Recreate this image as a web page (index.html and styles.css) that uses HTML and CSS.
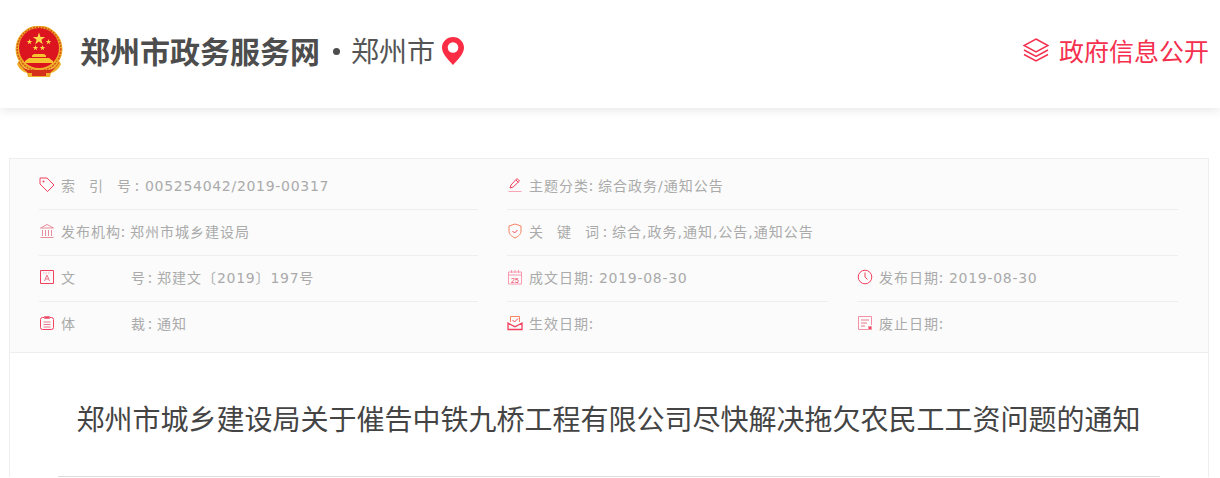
FILE: index.html

```html
<!DOCTYPE html>
<html lang="zh-CN">
<head>
    <meta charset="UTF-8">
    <meta name="viewport" content="width=device-width, initial-scale=1.0">
    <title>郑州市政务服务网</title>
    <link rel="stylesheet" href="styles.css">
</head>
<body>
    <header class="top">
        <svg class="emblem" viewBox="0 0 48 52">
            <circle cx="24" cy="23" r="23.5" fill="#eeb02a"/>
            <circle cx="24" cy="23" r="21.8" fill="none" stroke="#d9541a" stroke-width="1.500" stroke-dasharray="2 1"/>
            <circle cx="24" cy="22" r="20" fill="#dc1420"/>
            <polygon fill="#ffd84a" points="24,6.500 25.500,11 30.200,11 26.400,13.800 27.800,18.300 24,15.500 20.200,18.300 21.600,13.800 17.800,11 22.500,11"/>
            <polygon fill="#ffd84a" points="14.500,13 15.200,15 17.300,15 15.600,16.200 16.200,18.200 14.500,17 12.800,18.200 13.400,16.200 11.700,15 13.800,15"/>
            <polygon fill="#ffd84a" points="33.500,13 34.200,15 36.300,15 34.600,16.200 35.200,18.200 33.500,17 31.800,18.200 32.400,16.200 30.700,15 32.800,15"/>
            <polygon fill="#ffd84a" points="20.500,19 21.200,21 23.300,21 21.600,22.200 22.200,24.200 20.500,23 18.800,24.200 19.400,22.200 17.700,21 19.800,21"/>
            <polygon fill="#ffd84a" points="27.500,19 28.200,21 30.300,21 28.600,22.200 29.200,24.200 27.500,23 25.800,24.200 26.400,22.200 24.700,21 26.800,21"/>
            <path fill="#f6c42f" d="M17 31h14v-1.500l-2-1.500h-10l-2 1.500zM10 35l4-3h20l4 3v2H10z"/>
            <path fill="#eeb02a" d="M5 33c2 8 8 13 19 13s17-5 19-13l3 5c-2 5-6 8-10 9l-1 4H13l-1-4c-4-1-8-4-10-9z"/>
            <path fill="none" stroke="#d9541a" d="M4 36c3 6 7 9 12 10M44 36c-3 6-7 9-12 10"/>
            <path fill="#d5301c" d="M8 42l6 2 20 0 6-2-5 5H13zM17 47h14v3H17z"/>
        </svg>
        <h1 class="site-name">郑州市政务服务网</h1>
        <span class="dot"></span>
        <span class="city">郑州市</span>
        <svg class="pin" viewBox="0 0 22 28">
            <path fill="#fa2d45" d="M11 0C4.900 0 0 4.800 0 10.800 0 17.500 8 24.500 11 28c3-3.500 11-10.500 11-17.200C22 4.800 17.100 0 11 0z"/>
            <circle cx="11" cy="10.500" r="5.300" fill="#fff"/>
        </svg>
        <a class="open-link">
            <svg class="layers" viewBox="0 0 26 26">
                <path d="M13 2L25 8.500 13 15 1 8.500z"/>
                <path d="M1 13l12 6.500L25 13"/>
                <path d="M1 17.500L13 24l12-6.500"/>
            </svg>
            政府信息公开
        </a>
    </header>

    <main class="panel">
        <section class="info">
            <div class="item">
                <svg class="ico" viewBox="0 0 16 16"><path d="M1 2.500V1h7l7 7-6.500 6.500L1 7z"/><circle cx="4.500" cy="4.500" r="1" fill="#f3405f" stroke="none"/></svg>
                <span class="label tri">索引号</span><span class="colon">:</span>
                <span class="num date">005254042/2019-00317</span>
            </div>
            <div class="item wide">
                <svg class="ico" viewBox="0 0 16 16"><path d="M3 11l1-3 6-6.500 2.500 2.500-6.300 6zM9 3l2.500 2.500"/><path d="M1.500 14.500h13" stroke="#f9a5b3"/></svg>
                <span class="label">主题分类</span><span class="colon">:</span>
                <span class="value">综合政务/通知公告</span>
            </div>

            <div class="item">
                <svg class="ico" viewBox="0 0 16 16"><path d="M8 1.500L1.500 5h13zM3.500 7v6M6.500 7v6M9.500 7v6M12.500 7v6M1.500 14.500h13" stroke="#e98c9c"/></svg>
                <span class="label">发布机构</span><span class="colon">:</span>
                <span class="value">郑州市城乡建设局</span>
            </div>
            <div class="item wide">
                <svg class="ico" viewBox="0 0 16 16"><path d="M8 1l6 2v5c0 3.500-3 5.500-6 7-3-1.500-6-3.500-6-7V3z" stroke="#f7845f"/><path d="M5.500 8l2 2 3-3"/></svg>
                <span class="label tri">关键词</span><span class="colon">:</span>
                <span class="value">综合,政务,通知,公告,通知公告</span>
            </div>

            <div class="item">
                <svg class="ico" viewBox="0 0 16 16"><path d="M1.500 1.500h13v13h-13z"/><path d="M4 4h8" stroke="#f9a5b3" stroke-dasharray="1.500 1"/><path d="M5.500 12L8 6l2.500 6M6.500 10h3" stroke="#e9788c"/></svg>
                <span class="label duo">文号</span><span class="colon">:</span>
                <span class="value">郑建文〔<span class="num">2019</span>〕<span class="num">197</span>号</span>
            </div>
            <div class="item">
                <svg class="ico" viewBox="0 0 16 16"><path d="M1.500 3h13v12h-13zM1.500 6h13M4.500 1v3M8 1v3M11.500 1v3" stroke="#f79ab0"/><text x="8" y="13.500" class="ico-day">25</text></svg>
                <span class="label">成文日期</span><span class="colon">:</span>
                <span class="num date">2019-08-30</span>
            </div>
            <div class="item">
                <svg class="ico" viewBox="0 0 16 16"><circle cx="8" cy="8" r="6.800"/><path d="M8 3.500V8l2.500 2.500"/></svg>
                <span class="label">发布日期</span><span class="colon">:</span>
                <span class="num date">2019-08-30</span>
            </div>

            <div class="item last">
                <svg class="ico" viewBox="0 0 16 16"><rect x="1.500" y="2.500" width="13" height="12" rx="2"/><path d="M5.500 1.500h5v2h-5zM4.500 7h7M4.500 9.500h7M4.500 12h7" stroke="#e9788c"/></svg>
                <span class="label duo">体裁</span><span class="colon">:</span>
                <span class="value">通知</span>
            </div>
            <div class="item last">
                <svg class="ico" viewBox="0 0 16 16"><path d="M3.500 7V1.500h9V7" stroke="#f7845f"/><path d="M5.500 5l2 2 3.500-3.500"/><path d="M1 8l6.500 3.500h1L15 8v6.500H1z" stroke-width="1.300"/></svg>
                <span class="label">生效日期</span><span class="colon">:</span>
            </div>
            <div class="item last">
                <svg class="ico" viewBox="0 0 16 16"><path d="M11 14.500H1.500v-13h13V10" stroke="#f58fa3"/><path d="M4 5h8M4 8h6M4 11h4" stroke="#e9788c"/><path d="M11.500 11.500l3 3M14.500 11.500l-3 3" stroke-width="1.500"/></svg>
                <span class="label">废止日期</span><span class="colon">:</span>
            </div>
        </section>

        <h2 class="doc-title">郑州市城乡建设局关于催告中铁九桥工程有限公司尽快解决拖欠农民工工资问题的通知</h2>
    </main>
</body>
</html>
```

FILE: styles.css

```css
html, body {
    height: 478px;
    overflow: hidden;
}

body {
    margin: 0;
    background-color: #fff;
    font-family: "Noto Sans CJK SC", "Liberation Sans", sans-serif;
}

.top {
    display: flex;
    align-items: center;
    height: 108px;
    padding: 0 11px 4px 15px;
    box-sizing: border-box;
    background-color: #fff;
    box-shadow: 0 2px 10px rgba(0, 0, 0, 0.1);
}

.emblem {
    width: 48px;
    height: 52px;
    margin-right: 17px;
}

.site-name {
    margin: 0 0 5px;
    font-size: 30px;
    font-weight: bold;
    color: #4d4d4d;
}

.dot {
    width: 7px;
    height: 7px;
    margin: 0 11px 2px 13px;
    border-radius: 50%;
    background-color: #4d4d4d;
}

.city {
    margin-bottom: 5px;
    font-size: 28px;
    color: #555;
}

.pin {
    width: 22px;
    height: 28px;
    margin: 0 0 3px 7px;
}

.open-link {
    display: flex;
    align-items: center;
    margin: 0 0 5px auto;
    font-size: 25px;
    color: #f5304f;
}

.layers {
    width: 26px;
    height: 26px;
    margin-right: 10px;
    fill: none;
    stroke: #f5304f;
    stroke-width: 1.5;
}

.panel {
    width: 1198px;
    margin: 50px 0 0 9px;
    border: 1px solid #eee;
    border-bottom: none;
}

.info {
    display: grid;
    grid-template-columns: 439px 321px 321px;
    column-gap: 29px;
    padding: 5px 29px 4px;
    background-color: #fbfbfb;
    border-bottom: 1px solid #eee;
}

.item {
    display: flex;
    align-items: center;
    height: 46px;
    padding-bottom: 3px;
    box-sizing: border-box;
    border-bottom: 1px solid #eee;
    font-size: 14px;
    letter-spacing: 1px;
    color: #aaa;
}

.item.wide {
    grid-column: span 2;
}

.item.last {
    padding-bottom: 4px;
    border-bottom: none;
}

.ico {
    flex: none;
    width: 16px;
    height: 16px;
    margin-right: 6px;
    fill: none;
    stroke: #f3405f;
    stroke-width: 1;
}

.ico-day {
    font-family: "Liberation Sans", sans-serif;
    font-size: 7px;
    letter-spacing: 0;
    text-anchor: middle;
    fill: #f3405f;
    stroke: none;
}

.label {
    white-space: nowrap;
}

.label.tri {
    width: 71px;
    text-align-last: justify;
}

.label.duo {
    width: 85px;
    text-align-last: justify;
}

.colon {
    width: 8px;
    margin-right: 1px;
}

.tri + .colon {
    margin-left: 3px;
}

.duo + .colon {
    margin-left: 2px;
}

.value {
    font-family: "DejaVu Sans", "Noto Sans CJK SC", sans-serif;
    white-space: nowrap;
}

.num {
    font-family: "DejaVu Sans", sans-serif;
    letter-spacing: 0.7px;
    white-space: nowrap;
}

.date {
    margin: 2px 0 0 1px;
}

.doc-title {
    margin: 0 48px;
    padding: 47px 1px 39px 0;
    border-bottom: 1px solid #ddd;
    font-size: 28px;
    font-weight: normal;
    line-height: 37px;
    text-align: center;
    white-space: nowrap;
    color: #444;
}
```
